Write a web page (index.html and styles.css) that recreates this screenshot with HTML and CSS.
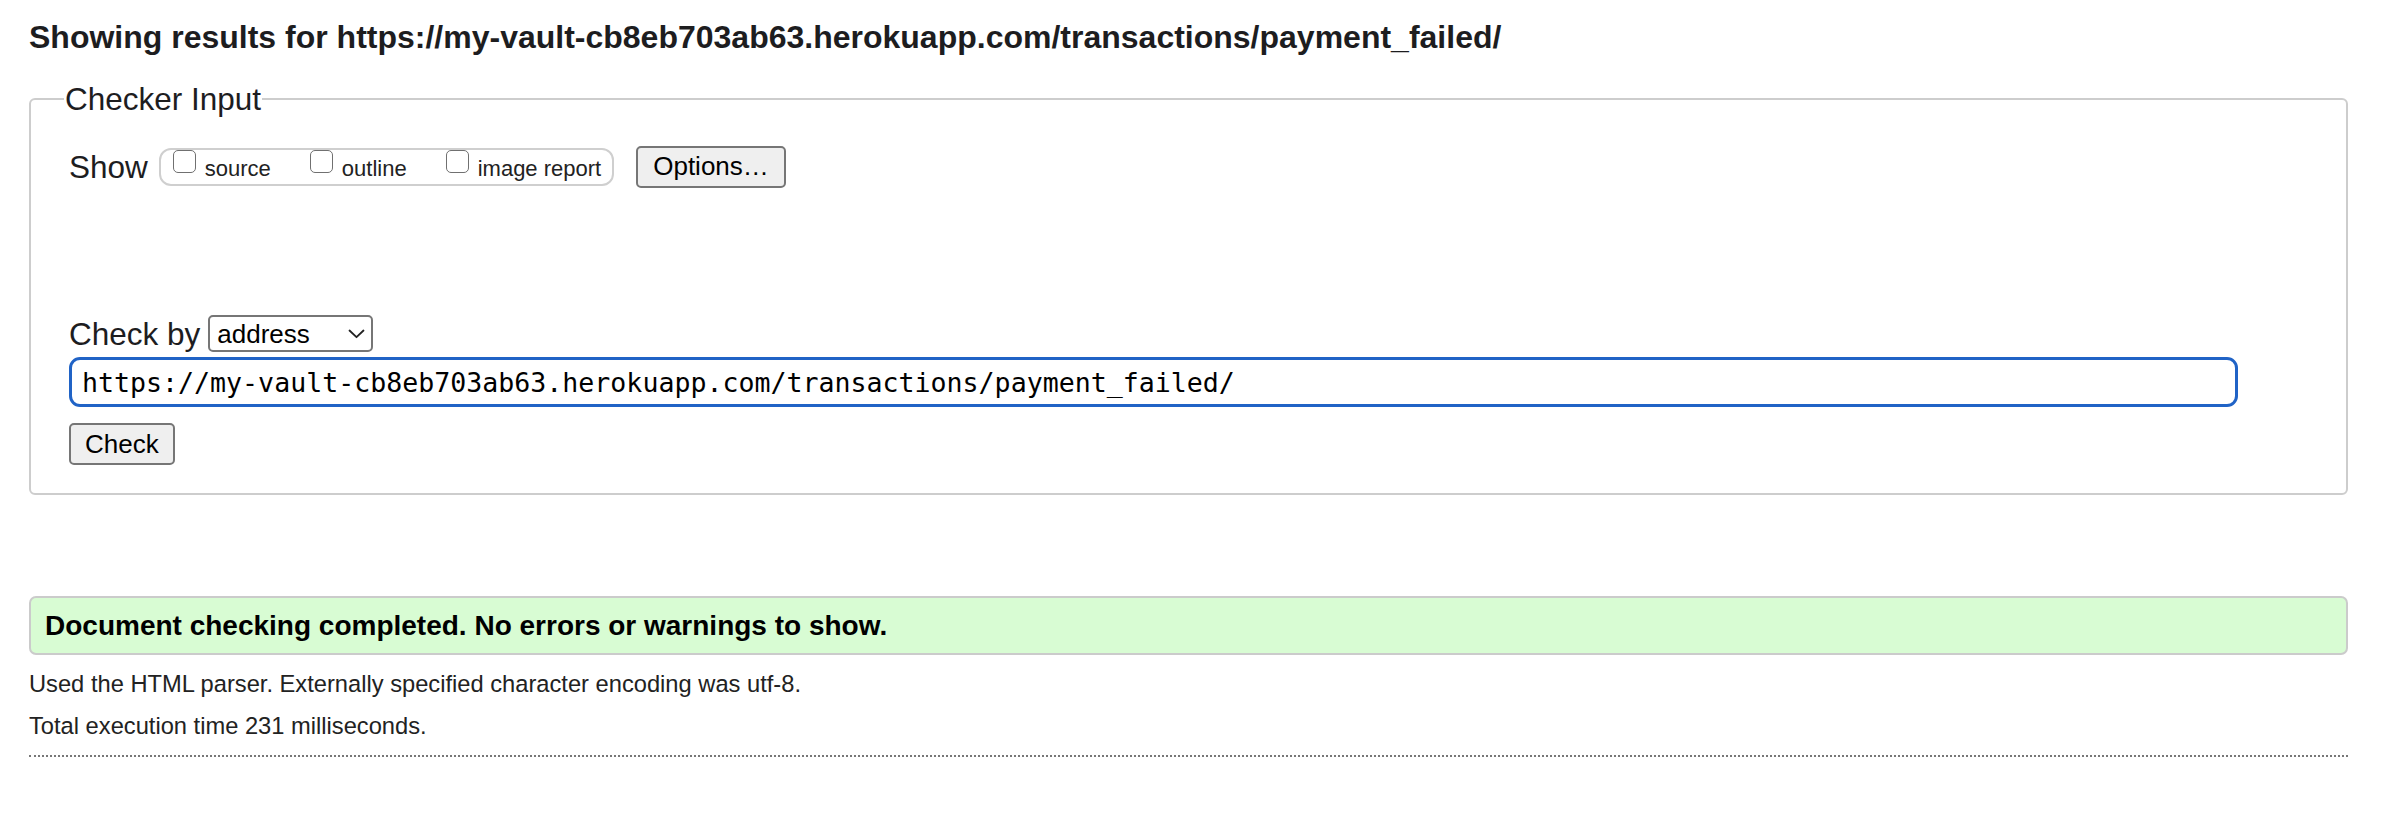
FILE: index.html
```html
<!DOCTYPE html>
<html lang="en">
<head>
<meta charset="utf-8">
<title>Showing results for https://my-vault-cb8eb703ab63.herokuapp.com/transactions/payment_failed/ - Nu Html Checker</title>
<link rel="stylesheet" href="styles.css">
</head>
<body>
<h2 class="heading">Showing results for https://my-vault-cb8eb703ab63.herokuapp.com/transactions/payment_failed/</h2>
<form class="checker">
  <fieldset class="checker-input">
    <legend class="legend">Checker Input</legend>
    <div class="show-row">
      <span class="row-label">Show</span>
      <div class="show-group">
        <label class="opt"><input type="checkbox" class="cb"><span class="opt-text">source</span></label>
        <label class="opt"><input type="checkbox" class="cb"><span class="opt-text">outline</span></label>
        <label class="opt"><input type="checkbox" class="cb"><span class="opt-text">image report</span></label>
      </div>
      <button type="button" class="btn btn-options">Options…</button>
    </div>
    <div class="checkby-row">
      <span class="row-label">Check by</span>
      <span class="select-wrap">
        <select class="select"><option>address</option></select>
        <svg class="chev" width="17" height="10" viewBox="0 0 17 10"><polyline points="1.5,1.5 8.5,8.2 15.5,1.5" fill="none" stroke="#222" stroke-width="1.8" stroke-linecap="round" stroke-linejoin="round"/></svg>
      </span>
    </div>
    <input class="url" type="url" value="https://my-vault-cb8eb703ab63.herokuapp.com/transactions/payment_failed/">
    <div class="submit-row"><button type="button" class="btn btn-check">Check</button></div>
  </fieldset>
</form>
<div class="success"><p class="success-text">Document checking completed. No errors or warnings to show.</p></div>
<p class="details">Used the HTML parser. Externally specified character encoding was utf-8.</p>
<p class="details">Total execution time 231 milliseconds.</p>
<hr class="rule">
</body>
</html>
```
FILE: styles.css
```css
html, body {
  background: #fff;
}
body {
  margin: 0;
  padding: 0 38px 0 29px;
  font-family: "Liberation Sans", Arial, Helvetica, sans-serif;
  color: #222;
}
.heading {
  margin: 19px 0 0;
  font-size: 32px;
  line-height: 37px;
  font-weight: bold;
  color: #1d1d1f;
}
.checker {
  margin: 0;
}
.checker-input {
  margin: 25px 0 0;
  padding: 30px 38px 28px 38px;
  border: 2px solid #cdcdcd;
  border-radius: 6px;
  min-width: 0;
}
.legend {
  margin-left: -5px;
  padding: 0 1px;
  font-size: 31.5px;
  line-height: 36px;
  color: #1d1d1f;
}
.row-label {
  font-size: 31.5px;
  line-height: 36px;
  color: #1d1d1f;
}
.show-row {
  display: flex;
  align-items: center;
  height: 43px;
  margin-top: -2px;
}
.show-group {
  display: flex;
  align-items: flex-start;
  box-sizing: border-box;
  height: 38px;
  margin-left: 11px;
  padding: 0 11px 0 12px;
  border: 2px solid #cfcfcf;
  border-radius: 12px;
}
.opt {
  display: flex;
  align-items: flex-start;
  margin-left: 39px;
}
.opt:first-child {
  margin-left: 0;
}
.cb {
  appearance: none;
  -webkit-appearance: none;
  box-sizing: border-box;
  width: 23px;
  height: 23px;
  margin: 0;
  border: 1.5px solid #707070;
  border-radius: 5px;
  background: #fff;
}
.opt-text {
  margin-left: 9px;
  padding-top: 6px;
  font-size: 22px;
  line-height: 26px;
  color: #222;
}
.btn {
  box-sizing: border-box;
  height: 42px;
  margin: 0;
  border: 2px solid #767676;
  border-radius: 5px;
  background: #efefef;
  font-family: "Liberation Sans", Arial, Helvetica, sans-serif;
  font-size: 26px;
  color: #000;
}
.btn-options {
  margin-left: 22px;
  padding: 0 15px;
}
.checkby-row {
  display: flex;
  align-items: center;
  height: 37px;
  margin-top: 127px;
}
.select-wrap {
  position: relative;
  display: inline-block;
  margin-left: 8px;
}
.select {
  appearance: none;
  -webkit-appearance: none;
  display: block;
  box-sizing: border-box;
  width: 165px;
  height: 37px;
  margin: 0;
  padding: 0 0 0 7px;
  border: 2px solid #767676;
  border-radius: 5px;
  background: #fff;
  font-family: "Liberation Sans", Arial, Helvetica, sans-serif;
  font-size: 26px;
  color: #000;
}
.chev {
  position: absolute;
  right: 8px;
  top: 14px;
  pointer-events: none;
}
.url {
  display: block;
  box-sizing: border-box;
  width: 2169px;
  max-width: 100%;
  height: 50px;
  margin: 5px 0 0;
  padding: 0 10px;
  border: 3px solid #2063c6;
  border-radius: 11px;
  outline: none;
  background: #fff;
  font-family: "DejaVu Sans Mono", "Liberation Mono", monospace;
  font-size: 26.6px;
  color: #000;
}
.submit-row {
  margin-top: 16px;
  display: flex;
}
.btn-check {
  padding: 0 14px;
}
.success {
  margin-top: 101px;
  box-sizing: border-box;
  height: 59px;
  padding: 0 14px;
  border: 2px solid #cbcbcb;
  border-radius: 7px;
  background: #d8fcd3;
}
.success-text {
  margin: 0;
  font-size: 28px;
  line-height: 55px;
  font-weight: bold;
  color: #000;
}
.details {
  margin: 15px 0 0;
  font-size: 23.7px;
  line-height: 28px;
  color: #222;
}
.details + .details {
  margin-top: 14px;
}
.rule {
  margin: 15px 0 0;
  height: 0;
  border: 0;
  border-top: 2px dotted #777;
}
```
